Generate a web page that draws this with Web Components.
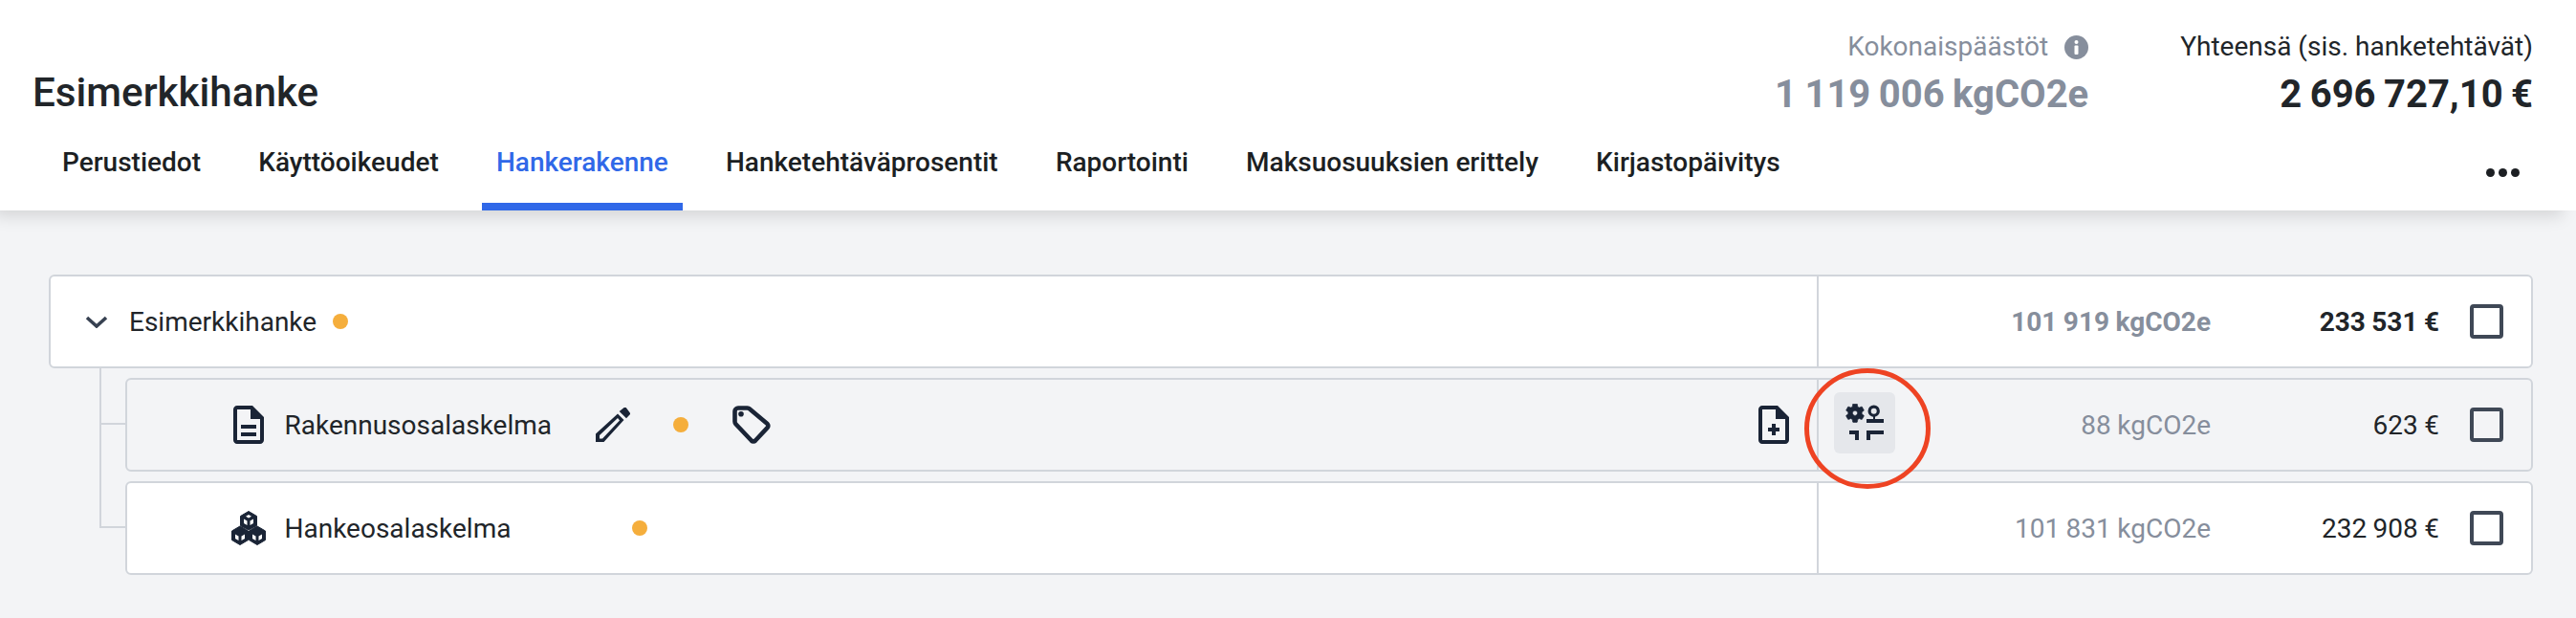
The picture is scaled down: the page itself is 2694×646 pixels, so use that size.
<!DOCTYPE html>
<html lang="fi">
<head>
<meta charset="utf-8">
<title>Esimerkkihanke</title>
<style>
  html, body { margin: 0; padding: 0; height: 100%; }
  body { background: #f3f4f6; font-family: Roboto, "Liberation Sans", sans-serif; color: #212529; overflow: hidden; }
</style>
</head>
<body>
<project-header>
  <span slot="title">Esimerkkihanke</span>
  <header-stat slot="stats" label="Kokonaispäästöt" value="1 119 006 kgCO2e" muted info></header-stat>
  <header-stat slot="stats" label="Yhteensä (sis. hanketehtävät)" value="2 696 727,10 €"></header-stat>
  <tab-item slot="tabs">Perustiedot</tab-item>
  <tab-item slot="tabs">Käyttöoikeudet</tab-item>
  <tab-item slot="tabs" active>Hankerakenne</tab-item>
  <tab-item slot="tabs">Hanketehtäväprosentit</tab-item>
  <tab-item slot="tabs">Raportointi</tab-item>
  <tab-item slot="tabs">Maksuosuuksien erittely</tab-item>
  <tab-item slot="tabs">Kirjastopäivitys</tab-item>
</project-header>

<tree-view>
  <tree-row slot="root" emissions="101 919 kgCO2e" cost="233 531 €" bold>
    <ui-icon slot="lead" name="chevron"></ui-icon>
    Esimerkkihanke
    <status-dot slot="actions"></status-dot>
  </tree-row>
  <tree-row child first shaded emissions="88 kgCO2e" cost="623 €">
    <ui-icon slot="lead" name="doc"></ui-icon>
    Rakennusosalaskelma
    <ui-icon slot="actions" name="pencil"></ui-icon>
    <status-dot slot="actions"></status-dot>
    <ui-icon slot="actions" name="tag"></ui-icon>
    <ui-icon slot="add" name="add"></ui-icon>
    <allocation-button slot="tool"></allocation-button>
  </tree-row>
  <tree-row child emissions="101 831 kgCO2e" cost="232 908 €">
    <ui-icon slot="lead" name="cubes"></ui-icon>
    Hankeosalaskelma
    <ui-icon slot="actions" name="pencil" style="visibility:hidden"></ui-icon>
    <status-dot slot="actions"></status-dot>
  </tree-row>
</tree-view>

<script>
const ICONS = {
  chevron: `<svg width="24" height="13" viewBox="0 0 24 13" fill="none"><path d="M2 2l10 9 10-9" stroke="#374151" stroke-width="3.6"/></svg>`,
  doc: `<svg width="32" height="40" viewBox="4 2 16 20" fill="#1a2436"><path d="M8 16h8v2H8zm0-4h8v2H8zm6-10H6c-1.1 0-2 .9-2 2v16c0 1.1.89 2 1.99 2H18c1.1 0 2-.9 2-2V8l-6-6zm4 18H6V4h7v5h5v11z"/></svg>`,
  add: `<svg width="32" height="40" viewBox="4 2 16 20" fill="#1a2436"><path d="M13 11.5h-2v2H9v2h2v2h2v-2h2v-2h-2zM14 2H6c-1.1 0-2 .9-2 2v16c0 1.1.89 2 1.99 2H18c1.1 0 2-.9 2-2V8l-6-6zm4 18H6V4h7v5h5v11z"/></svg>`,
  pencil: `<svg width="36" height="36" viewBox="0 0 36 36" fill="#1a2436"><path fill-rule="evenodd" d="M0 36v-8.500L23 6.500l6.500 6.500L8.500 36zM4 32.500h3L25 13.500 23 11 4 29z"/><path d="M24.700 4l5-4h2L36 5.700V7l-4 4.300z"/></svg>`,
  tag: `<svg width="40" height="40" viewBox="0 0 40 40" fill="none" stroke="#1a2436" stroke-width="4.6" stroke-linejoin="round"><path d="M2.5 6a3.5 3.5 0 0 1 3.5-3.5h9.5a4 4 0 0 1 2.8 1.2L36.500 19a3 3 0 0 1 0 4.200L24 36.500a3 3 0 0 1-4.200 0L3.700 19.500a4 4 0 0 1-1.200-2.800z"/><circle cx="9" cy="8.8" r="2.8" fill="#1a2436" stroke="none"/></svg>`,
  cubes: `<svg width="36" height="36" viewBox="0 0 36 36"><g fill="#1a2436" stroke="#1a2436" stroke-width="1" stroke-linejoin="round"><path d="M18 .5l8.5 5v10L18 20l-8.5-4.500v-10z"/><path d="M9 16l8.5 5v9.500L9 35.500.5 30.500V21z"/><path d="M27 16l8.5 5v9.500L27 35.500l-8.500-5V21z"/></g><g fill="#fff"><path d="M18 4l3 1.700-3 1.700-3-1.700z"/><path d="M13 8.500l3.500 2V15L13 13z"/><path d="M23 8.500l-3.500 2V15l3.500-2z"/><path d="M4 24.500l3.500 2V31L4 29z"/><path d="M14 24.500l-3.500 2V31l3.500-2z"/><path d="M22 24.500l3.500 2V31L22 29z"/><path d="M32 24.500l-3.500 2V31l3.500-2z"/></g></svg>`,
  info: `<svg width="25" height="25" viewBox="0 0 25 25"><circle cx="12.5" cy="12.5" r="12.5" fill="#868e9c"/><circle cx="12.5" cy="7" r="2" fill="#fff"/><rect x="10.5" y="10.5" width="4" height="9.5" rx="1" fill="#fff"/></svg>`,
  allocation: `<svg width="40" height="40" viewBox="0 0 40 40" fill="#1a2436"><svg x="-2" y="-2.2" width="24" height="24" viewBox="0 0 24 24"><path stroke="#1a2436" stroke-width=".6" fill-rule="evenodd" d="M19.14 12.94c.04-.3.06-.61.06-.94 0-.32-.02-.64-.07-.94l2.03-1.58c.18-.14.23-.41.12-.61l-1.92-3.32c-.12-.22-.37-.29-.59-.22l-2.39.96c-.5-.38-1.03-.7-1.62-.94l-.36-2.54c-.04-.24-.24-.41-.48-.41h-3.84c-.24 0-.43.17-.47.41l-.36 2.54c-.59.24-1.13.57-1.62.94l-2.39-.96c-.22-.08-.47 0-.59.22L2.74 8.87c-.12.21-.08.47.12.61l2.03 1.58c-.05.3-.09.63-.09.94s.02.64.07.94l-2.03 1.58c-.18.14-.23.41-.12.61l1.92 3.32c.12.22.37.29.59.22l2.39-.96c.5.38 1.03.7 1.62.94l.36 2.54c.05.24.24.41.48.41h3.84c.24 0 .44-.17.47-.41l.36-2.54c.59-.24 1.13-.56 1.62-.94l2.39.96c.22.08.47 0 .59-.22l1.92-3.32c.12-.22.07-.47-.12-.61l-2.01-1.58zM12 14.6c-1.4 0-2.6-1.2-2.6-2.6s1.2-2.6 2.6-2.6 2.6 1.2 2.6 2.6-1.2 2.6-2.6 2.6z"/></svg><circle cx="29.7" cy="7.7" r="4.6" fill="none" stroke="#1a2436" stroke-width="3.2"/><path d="M29 12h2v5h-2z"/><path d="M22 16h18v4H22z"/><path d="M4 28h10v10h-4v-6H4z"/><path d="M22 38V28h18v4H26v6z"/></svg>`
};

class UiIcon extends HTMLElement {
  connectedCallback() {
    if (this.shadowRoot) return;
    this.attachShadow({ mode: 'open' }).innerHTML = `
      <style>:host { display: inline-flex; flex: none; } svg { display: block; }</style>
      ${ICONS[this.getAttribute('name')]}`;
  }
}
customElements.define('ui-icon', UiIcon);

class StatusDot extends HTMLElement {
  constructor() {
    super();
    this.attachShadow({ mode: 'open' }).innerHTML = `
      <style>:host { display: block; flex: none; width: 16px; height: 16px; border-radius: 50%; background: #f5ae3c; }</style>`;
  }
}
customElements.define('status-dot', StatusDot);

class CheckBox extends HTMLElement {
  constructor() {
    super();
    this.attachShadow({ mode: 'open' }).innerHTML = `
      <style>:host { display: block; flex: none; box-sizing: border-box; width: 35px; height: 36px; border: 4px solid #3f4856; border-radius: 4px; }</style>`;
  }
}
customElements.define('check-box', CheckBox);

class HeaderStat extends HTMLElement {
  connectedCallback() {
    if (this.shadowRoot) return;
    const info = this.hasAttribute('info') ? '<ui-icon name="info"></ui-icon>' : '';
    this.attachShadow({ mode: 'open' }).innerHTML = `
      <style>
        :host { display: flex; flex-direction: column; align-items: flex-end; color: #212529; }
        :host([muted]) { color: #868e9c; }
        .label { display: flex; align-items: center; gap: 17px; font-size: 28px; line-height: 40px; height: 40px; }
        .value { font-size: 40px; font-weight: 700; line-height: 46px; margin-top: 7px; word-spacing: -1.5px; }
      </style>
      <div class="label"><span>${this.getAttribute('label')}</span>${info}</div>
      <div class="value">${this.getAttribute('value')}</div>`;
  }
}
customElements.define('header-stat', HeaderStat);

class TabItem extends HTMLElement {
  constructor() {
    super();
    this.attachShadow({ mode: 'open' }).innerHTML = `
      <style>
        :host { display: block; padding: 30px 15px 22px; border-bottom: 8px solid transparent; font-size: 28px; font-weight: 500; line-height: 40px; color: #1c1f23; white-space: nowrap; }
        :host([active]) { color: #3068e8; border-bottom-color: #3068e8; }
      </style>
      <slot></slot>`;
  }
}
customElements.define('tab-item', TabItem);

class ProjectHeader extends HTMLElement {
  constructor() {
    super();
    this.attachShadow({ mode: 'open' }).innerHTML = `
      <style>
        :host { display: block; position: relative; z-index: 1; height: 220px; box-sizing: border-box; padding: 29px 45px 0 34px; background: #fff; box-shadow: -10px 10px 16px -4px rgba(0,0,0,.13); }
        .top { display: flex; justify-content: space-between; height: 91px; }
        h1 { margin: 43px 0 0; font-size: 42.2px; font-weight: 500; line-height: 50px; }
        .stats { display: flex; gap: 96px; }
        nav { display: flex; align-items: flex-start; gap: 30.2px; margin-left: 16px; }
        .more { margin-left: auto; display: flex; gap: 4px; padding-top: 56px; margin-right: 14px; }
        .more i { width: 9px; height: 9px; border-radius: 50%; background: #1c1f23; }
      </style>
      <div class="top">
        <h1><slot name="title"></slot></h1>
        <div class="stats"><slot name="stats"></slot></div>
      </div>
      <nav>
        <slot name="tabs"></slot>
        <div class="more"><i></i><i></i><i></i></div>
      </nav>`;
  }
}
customElements.define('project-header', ProjectHeader);

class TreeView extends HTMLElement {
  constructor() {
    super();
    this.attachShadow({ mode: 'open' }).innerHTML = `
      <style>
        :host { display: block; padding: 67px 45px 0 51px; }
        .children { display: flex; flex-direction: column; gap: 10px; margin: 10px 0 0 80px; }
      </style>
      <slot name="root"></slot>
      <div class="children"><slot></slot></div>`;
  }
}
customElements.define('tree-view', TreeView);

class TreeRow extends HTMLElement {
  connectedCallback() {
    if (this.shadowRoot) return;
    this.attachShadow({ mode: 'open' }).innerHTML = `
      <style>
        :host { display: flex; position: relative; box-sizing: border-box; height: 98px; border: 2px solid #d1d5db; border-radius: 6px; background: #fff; font-size: 28px; color: #212529; }
        :host([shaded]) { background: #f3f4f6; }
        /* tree connectors, drawn in the gap left of the row */
        :host([child])::before { content: ""; position: absolute; left: -29px; top: 45px; width: 27px; height: 2px; background: #d1d5db; }
        :host([child])::after { content: ""; position: absolute; left: -29px; top: -62px; width: 2px; height: 109px; background: #d1d5db; }
        :host([first])::after { top: -12px; height: 59px; }
        .main { flex: 1; display: flex; align-items: center; padding: 0 29px 0 36px; min-width: 0; }
        :host([child]) .main { padding-left: 109px; }
        .lead { display: flex; justify-content: center; flex: none; margin-right: 22px; }
        :host([child]) .lead { width: 36px; margin-right: 19.5px; }
        .name { white-space: nowrap; }
        .actions { display: flex; align-items: center; gap: 45.5px; margin-left: 45.5px; }
        :host(:not([child])) .actions { margin-left: 17px; }
        .add { margin-left: auto; display: flex; }
        .cost { flex: none; width: 747px; box-sizing: border-box; display: flex; align-items: center; border-left: 2px solid #d1d5db; padding: 0 29px 0 16px; }
        .value { margin-left: auto; color: #868e9c; white-space: nowrap; word-spacing: -.5px; }
        .amount { margin-left: 39px; width: 200px; text-align: right; white-space: nowrap; word-spacing: -.5px; }
        check-box { margin-left: 32px; }
        :host([bold]) .value, :host([bold]) .amount { font-weight: 700; }
      </style>
      <div class="main">
        <div class="lead"><slot name="lead"></slot></div>
        <span class="name"><slot></slot></span>
        <div class="actions"><slot name="actions"></slot></div>
        <div class="add"><slot name="add"></slot></div>
      </div>
      <div class="cost">
        <slot name="tool"></slot>
        <span class="value">${this.getAttribute('emissions')}</span>
        <span class="amount">${this.getAttribute('cost')}</span>
        <check-box></check-box>
      </div>`;
  }
}
customElements.define('tree-row', TreeRow);

class AllocationButton extends HTMLElement {
  constructor() {
    super();
    this.attachShadow({ mode: 'open' }).innerHTML = `
      <style>
        :host { display: flex; position: relative; z-index: 2; align-items: center; justify-content: center; width: 64px; height: 64px; margin-top: -4px; border-radius: 6px; background: #e5e7eb; }
        .ring { position: absolute; left: -31px; top: -25px; }
      </style>
      <ui-icon name="allocation"></ui-icon>
      <svg class="ring" width="132" height="126" viewBox="0 0 132 126" fill="none"><ellipse cx="66" cy="63" rx="63.5" ry="60.5" stroke="#ee4323" stroke-width="5"/></svg>`;
  }
}
customElements.define('allocation-button', AllocationButton);
</script>
</body>
</html>
